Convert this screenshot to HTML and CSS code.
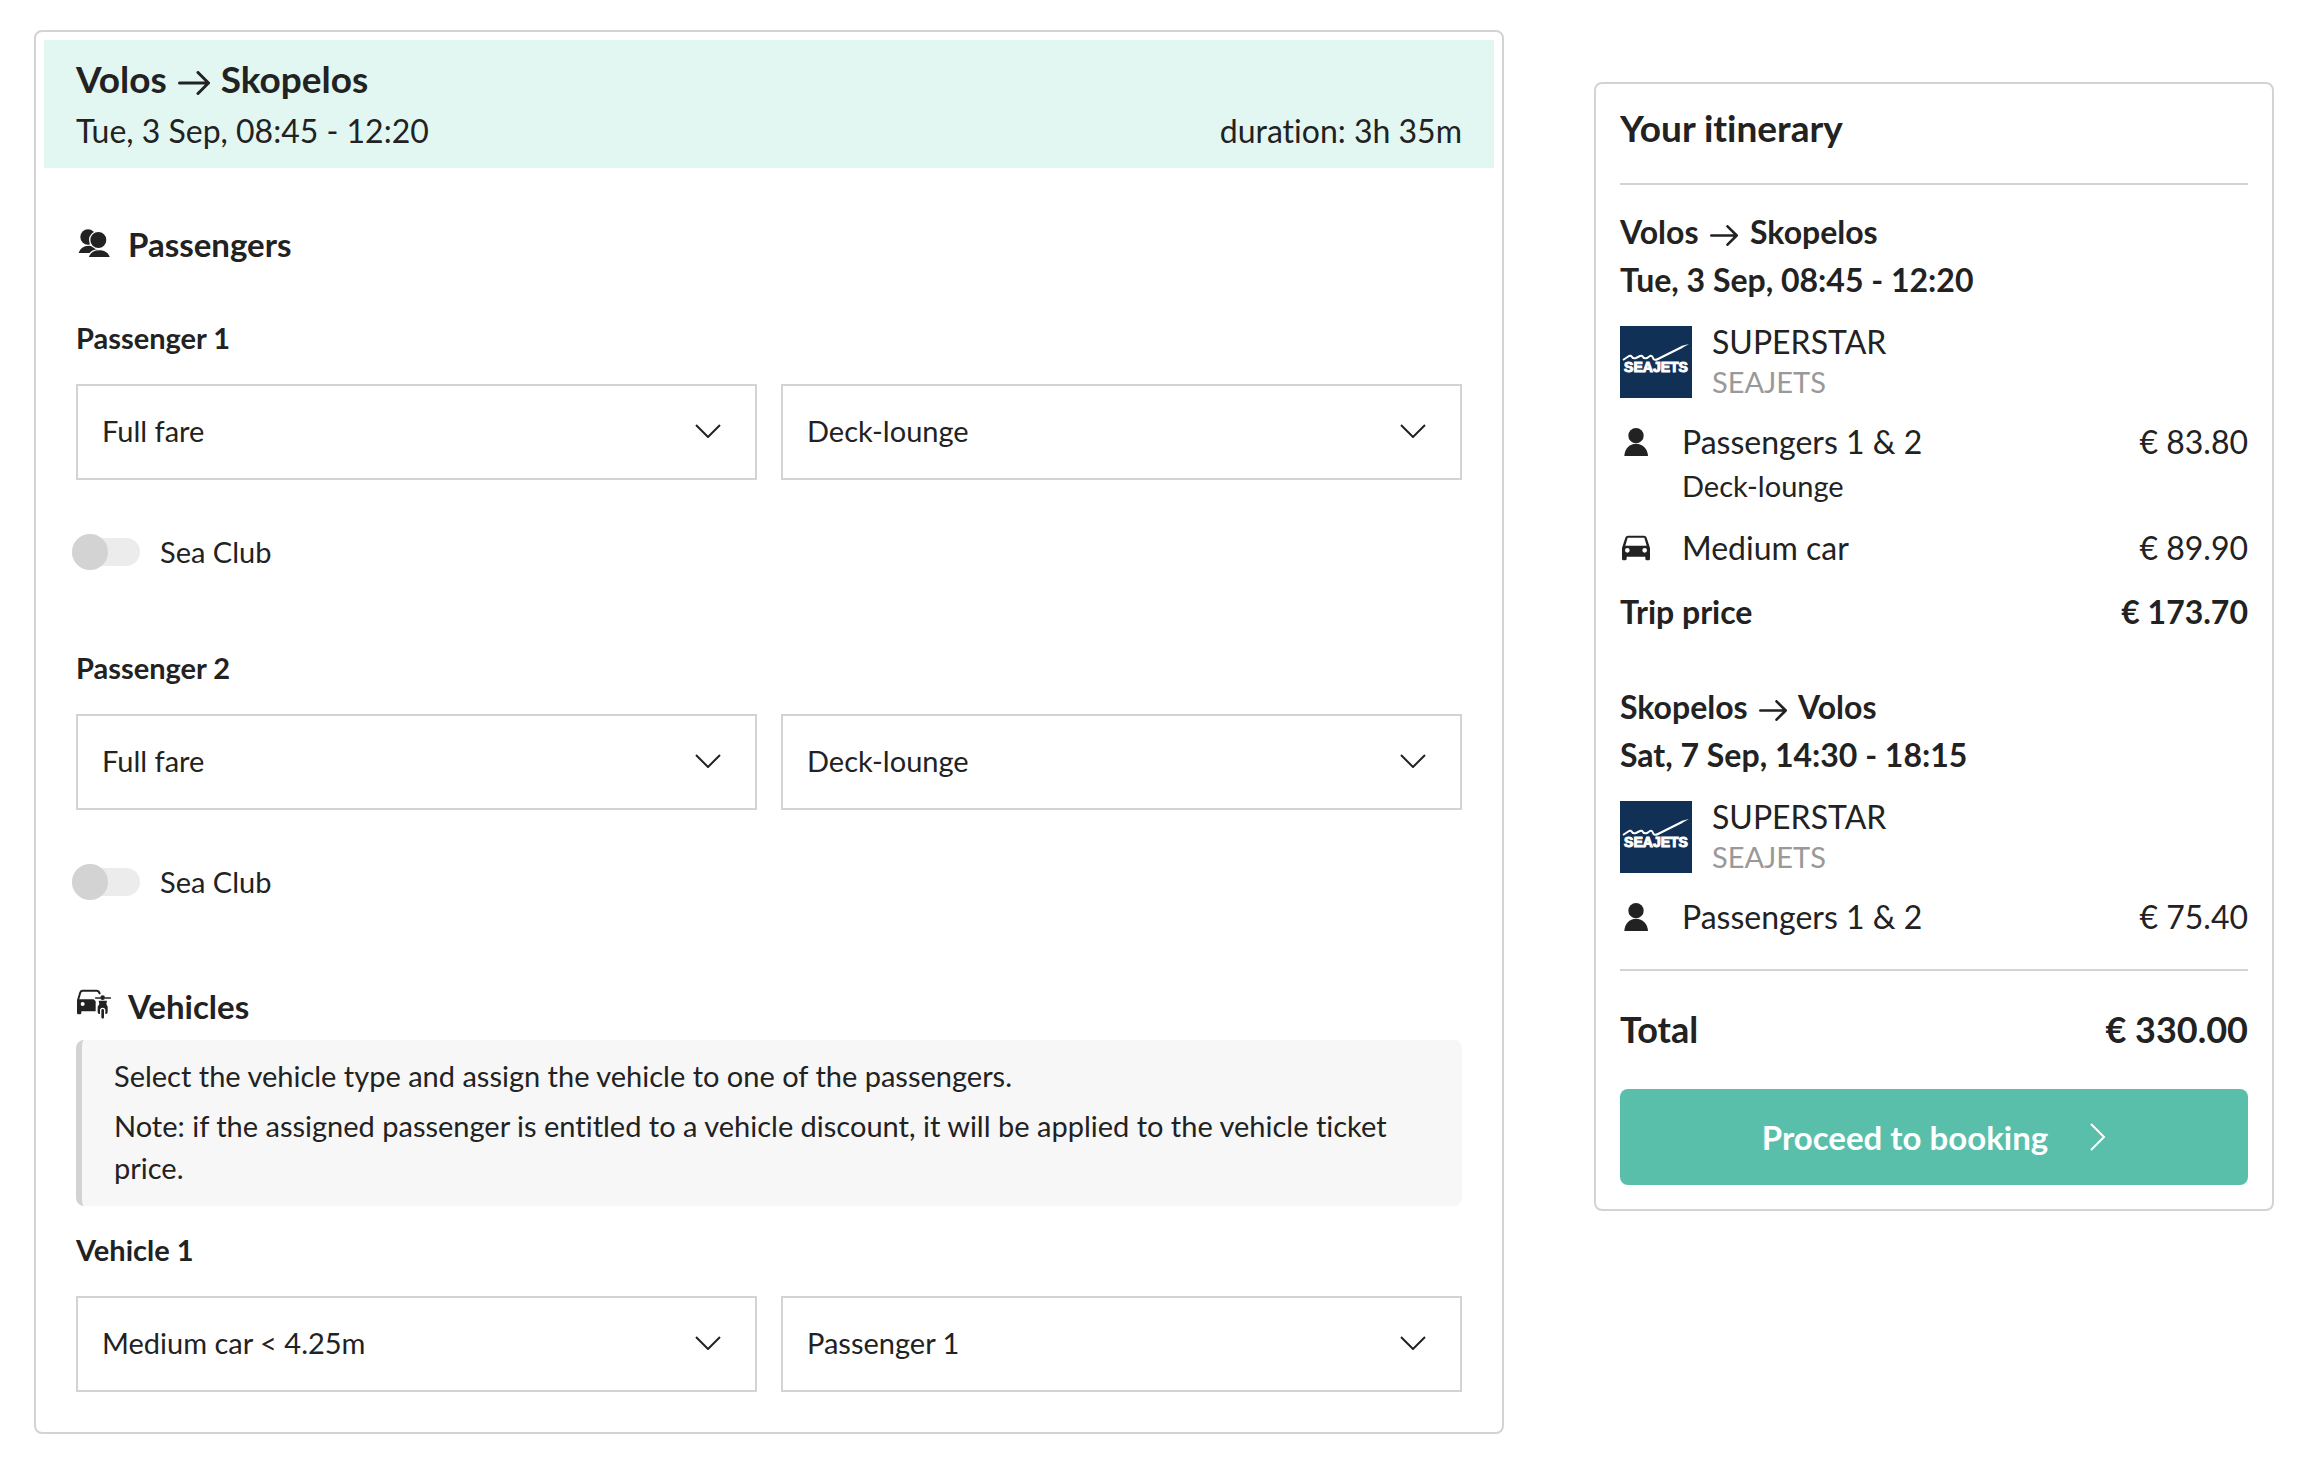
FILE: index.html
```
<!DOCTYPE html>
<html lang="en">
<head>
  <meta charset="UTF-8">
  <meta name="viewport" content="width=device-width, initial-scale=1.0">
  <title>Volos - Skopelos</title>
  <link rel="stylesheet" href="styles.css">
</head>
<body>

  <!-- shared icons -->
  <svg class="sprite" aria-hidden="true">
    <symbol id="arrow" viewBox="0 0 32 24">
      <path d="M1.5 12h29M20 1.5L30.5 12L20 22.5" fill="none" stroke="currentColor" stroke-width="3" stroke-linecap="round" stroke-linejoin="round"/>
    </symbol>
    <symbol id="chevron" viewBox="0 0 26 14">
      <path d="M1 1l12 12L25 1" fill="none" stroke="currentColor" stroke-width="2"/>
    </symbol>
    <symbol id="person" viewBox="6 312 96 96">
      <circle cx="54" cy="341" r="23"/>
      <path d="M19 402c1-22 15-37 35-37s35 15 36 37z"/>
    </symbol>
    <symbol id="car" viewBox="6 630 96 96">
      <path fill-rule="evenodd" d="M12 678L22 647q2-6 8-6h48q6 0 8 6l10 31v32q0 5-5 5h-4q-5 0-5-5v-6H26v6q0 5-5 5h-4q-5 0-5-5zM22 671h64l-7-24H29zM28 678a7 7 0 1 0 0 14a7 7 0 1 0 0-14zM80 678a7 7 0 1 0 0 14a7 7 0 1 0 0-14z"/>
    </symbol>
    <symbol id="seajets" viewBox="0 0 72 72">
      <rect width="72" height="72" fill="#113055"/>
      <path d="M3 34L9 30q2-1 3 1t4 1L20 30q2-1 3 1t4 1L30 30q2-1 3 2t5 1L62 21" fill="none" stroke="#fff" stroke-width="2"/>
      <path d="M61 20l8-2-7 4z" fill="#fff"/>
      <text class="logo-text" x="36" y="46" text-anchor="middle">SEAJETS</text>
    </symbol>
  </svg>

  <div class="page">
    <main class="card trip">
      <header class="trip-header">
        <div>
          <h1 class="title">Volos <svg class="arrow"><use href="#arrow"/></svg> Skopelos</h1>
          <p class="trip-date">Tue, 3 Sep, 08:45 - 12:20</p>
        </div>
        <p class="trip-date">duration: 3h 35m</p>
      </header>

      <div class="trip-body">
        <h2 class="section-title">
          <svg class="section-icon" viewBox="18 15 108 102">
            <circle cx="54" cy="45" r="23"/>
            <path d="M26 93c4-13 15-22 30-22s26 9 30 22z"/>
            <circle cx="85" cy="54" r="26" stroke="#fff" stroke-width="4"/>
            <path d="M54 107c4-15 16-24 34-24s30 9 34 24z" stroke="#fff" stroke-width="4"/>
          </svg>
          Passengers
        </h2>

        <section class="passenger">
          <h3 class="item-title">Passenger 1</h3>
          <div class="selects">
            <div class="select-box">
              <select aria-label="Passenger 1 fare"><option>Full fare</option></select>
              <svg class="chevron"><use href="#chevron"/></svg>
            </div>
            <div class="select-box">
              <select aria-label="Passenger 1 seat"><option>Deck-lounge</option></select>
              <svg class="chevron"><use href="#chevron"/></svg>
            </div>
          </div>
          <label class="toggle"><input type="checkbox"> Sea Club</label>
        </section>

        <section class="passenger">
          <h3 class="item-title">Passenger 2</h3>
          <div class="selects">
            <div class="select-box">
              <select aria-label="Passenger 2 fare"><option>Full fare</option></select>
              <svg class="chevron"><use href="#chevron"/></svg>
            </div>
            <div class="select-box">
              <select aria-label="Passenger 2 seat"><option>Deck-lounge</option></select>
              <svg class="chevron"><use href="#chevron"/></svg>
            </div>
          </div>
          <label class="toggle"><input type="checkbox"> Sea Club</label>
        </section>

        <h2 class="section-title">
          <svg class="section-icon" viewBox="18 12 108 102">
            <path d="M24 46l7-24q2-5 7-5h42q6 0 9 8" fill="none" stroke="#222" stroke-width="6" stroke-linecap="round"/>
            <path fill-rule="evenodd" d="M21 51q0-8 7-8h43l6 6v30H34v5q0 4-4 4h-5q-4 0-4-4zM38 51a6 6 0 1 0 0 12a6 6 0 1 0 0-12z"/>
            <path d="M77 39h14M106 39h15" stroke="#222" stroke-width="5" stroke-linecap="round"/>
            <circle cx="98" cy="38" r="7"/>
            <path d="M86 47h25l-2 10 4 8v16q0 6-5 6h-20q-5 0-5-6V65l5-8z"/>
            <rect x="92" y="70" width="12" height="33" rx="6" stroke="#fff" stroke-width="4"/>
          </svg>
          Vehicles
        </h2>

        <div class="note">
          <p>Select the vehicle type and assign the vehicle to one of the passengers.</p>
          <p>Note: if the assigned passenger is entitled to a vehicle discount, it will be applied to the vehicle ticket price.</p>
        </div>

        <section class="vehicle">
          <h3 class="item-title">Vehicle 1</h3>
          <div class="selects">
            <div class="select-box">
              <select aria-label="Vehicle 1 type"><option>Medium car &lt; 4.25m</option></select>
              <svg class="chevron"><use href="#chevron"/></svg>
            </div>
            <div class="select-box">
              <select aria-label="Vehicle 1 passenger"><option>Passenger 1</option></select>
              <svg class="chevron"><use href="#chevron"/></svg>
            </div>
          </div>
        </section>
      </div>
    </main>

    <aside class="card itinerary">
      <h2 class="title">Your itinerary</h2>

      <section class="leg">
        <h3 class="leg-title">Volos <svg class="arrow small"><use href="#arrow"/></svg> Skopelos</h3>
        <p class="leg-title">Tue, 3 Sep, 08:45 - 12:20</p>
        <div class="ship">
          <svg class="ship-logo"><use href="#seajets"/></svg>
          <div>
            <p class="ship-name">SUPERSTAR</p>
            <p class="ship-company">SEAJETS</p>
          </div>
        </div>
        <div class="price-row">
          <svg class="row-icon"><use href="#person"/></svg>
          <div class="row-name">Passengers 1 &amp; 2 <span class="row-detail">Deck-lounge</span></div>
          <span>€ 83.80</span>
        </div>
        <div class="price-row">
          <svg class="row-icon"><use href="#car"/></svg>
          <div class="row-name">Medium car</div>
          <span>€ 89.90</span>
        </div>
        <div class="trip-price">
          <span>Trip price</span>
          <span>€ 173.70</span>
        </div>
      </section>

      <section class="leg">
        <h3 class="leg-title">Skopelos <svg class="arrow small"><use href="#arrow"/></svg> Volos</h3>
        <p class="leg-title">Sat, 7 Sep, 14:30 - 18:15</p>
        <div class="ship">
          <svg class="ship-logo"><use href="#seajets"/></svg>
          <div>
            <p class="ship-name">SUPERSTAR</p>
            <p class="ship-company">SEAJETS</p>
          </div>
        </div>
        <div class="price-row">
          <svg class="row-icon"><use href="#person"/></svg>
          <div class="row-name">Passengers 1 &amp; 2</div>
          <span>€ 75.40</span>
        </div>
      </section>

      <div class="total">
        <span>Total</span>
        <span>€ 330.00</span>
      </div>
      <button class="proceed" type="button">
        Proceed to booking
        <svg class="next" viewBox="0 0 16 28"><path d="M1 1l13 13L1 27" fill="none" stroke="currentColor" stroke-width="2"/></svg>
      </button>
    </aside>
  </div>

</body>
</html>
```
FILE: styles.css
```
* {
  box-sizing: border-box;
}

body {
  margin: 0;
  font-family: Lato, sans-serif;
  font-size: 29px;
  line-height: 40px;
  font-variant-ligatures: none;
  color: #222;
  background: #fff;
}

h1, h2, h3, p {
  margin: 0;
}

svg {
  flex: none;
  fill: #222;
}

.sprite {
  display: none;
}

.page {
  display: grid;
  grid-template-columns: minmax(0, 147fr) minmax(0, 68fr);
  gap: 90px;
  align-items: start;
  padding: 30px 46px 24px 34px;
}

.card {
  border: 2px solid #d3d3d3;
  border-radius: 8px;
}

.title {
  font-size: 37px;
  line-height: 52px;
  font-weight: 700;
}

.arrow {
  width: 32px;
  height: 24px;
  margin: 0 2px;
  vertical-align: -2px;
}

.arrow.small {
  width: 28px;
  height: 21px;
}

/* trip card */
.trip {
  padding: 8px;
}

.trip-header {
  display: flex;
  justify-content: space-between;
  align-items: flex-end;
  padding: 13px 32px 11px;
  background: #e2f7f2;
}

.trip-date {
  font-size: 32px;
  line-height: 52px;
}

.trip-body {
  padding: 56px 32px 32px;
}

.section-title {
  display: flex;
  align-items: center;
  gap: 16px;
  font-size: 33px;
  line-height: 40px;
}

.section-icon {
  width: 36px;
  height: 34px;
}

.item-title {
  font-size: 29px;
}

.passenger {
  padding-top: 54px;
}

.passenger + .passenger {
  padding-top: 76px;
}

.passenger + .section-title {
  margin-top: 84px;
}

.selects {
  display: grid;
  grid-template-columns: 1fr 1fr;
  gap: 24px;
  margin-top: 26px;
}

.select-box {
  position: relative;
}

select {
  display: block;
  width: 100%;
  height: 96px;
  padding: 0 70px 2px 24px;
  border: 2px solid #d3d3d3;
  border-radius: 0;
  appearance: none;
  background: #fff;
  font: inherit;
  color: inherit;
}

.chevron {
  position: absolute;
  top: 40px;
  right: 36px;
  width: 26px;
  height: 14px;
  pointer-events: none;
}

.toggle {
  display: flex;
  align-items: center;
  gap: 20px;
  margin: 52px 0 0 -4px;
}

.toggle input {
  appearance: none;
  display: flex;
  align-items: center;
  width: 68px;
  height: 28px;
  margin: 0;
  border-radius: 14px;
  background: #ececec;
}

.toggle input::before {
  content: "";
  flex: none;
  width: 36px;
  height: 36px;
  border-radius: 50%;
  background: #d3d3d3;
}

.toggle input:checked {
  justify-content: flex-end;
}

.note {
  margin-top: 14px;
  padding: 15px 32px 17px;
  border-left: 6px solid #d3d3d3;
  border-radius: 8px;
  background: #f7f7f7;
  line-height: 42px;
}

.note p + p {
  margin-top: 8px;
}

.vehicle {
  margin-top: 24px;
}

/* itinerary card */
.itinerary {
  margin-top: 52px;
  padding: 18px 24px 24px;
  font-size: 32px;
  line-height: 44px;
}

.itinerary .title {
  padding-bottom: 29px;
  border-bottom: 2px solid #d3d3d3;
}

.leg {
  padding-top: 23px;
}

.leg + .leg {
  padding-top: 47px;
}

.leg-title {
  font-size: 32px;
  line-height: 48px;
  font-weight: 700;
}

.leg-title .arrow {
  margin: 0 4px;
}

.ship {
  display: flex;
  align-items: center;
  gap: 20px;
  margin: 18px 0;
  line-height: 40px;
}

.ship-logo {
  width: 72px;
  height: 72px;
}

.logo-text {
  font-family: "Liberation Sans", Arial, sans-serif;
  font-size: 14px;
  font-weight: 700;
  fill: #fff;
  stroke: #fff;
  stroke-width: 1px;
}

.ship-company {
  font-size: 29px;
  color: #999;
}

.price-row {
  display: flex;
  align-items: flex-start;
  margin-bottom: 18px;
}

.row-icon {
  width: 32px;
  height: 32px;
  margin: 6px 30px 6px 0;
}

.row-name {
  flex: 1;
}

.row-detail {
  display: block;
  font-size: 29px;
}

.trip-price,
.total {
  display: flex;
  justify-content: space-between;
  line-height: 48px;
  font-weight: 700;
}

.total {
  margin-top: 30px;
  padding-top: 32px;
  border-top: 2px solid #d3d3d3;
  font-size: 36px;
  line-height: 52px;
}

.proceed {
  display: flex;
  justify-content: center;
  align-items: center;
  gap: 42px;
  width: 100%;
  height: 96px;
  margin-top: 34px;
  border: 0;
  border-radius: 8px;
  background: #5abfaa;
  color: #fff;
  font: inherit;
  font-size: 33px;
  font-weight: 700;
}

.next {
  width: 16px;
  height: 28px;
}
```
